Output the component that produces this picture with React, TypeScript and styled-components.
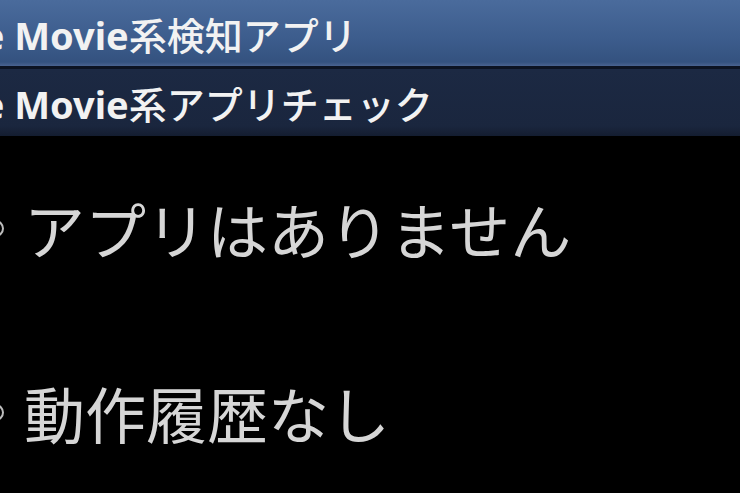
import styled, { createGlobalStyle } from "styled-components";

const Global = createGlobalStyle`
    html, body {
        margin: 0;
        padding: 0;
        background: #000;
        overflow: hidden;
    }
    #root {
        width: 740px;
        height: 493px;
        overflow: hidden;
        background: #000;
    }
`;

const Screen = styled.main`
    display: flex;
    flex-direction: column;
    width: 740px;
    height: 493px;
    overflow: hidden;
    font-family: "Noto Sans", "Noto Sans CJK JP", sans-serif;
`;

const Bar = styled.header<{ $variant: "title" | "sub" }>`
    flex: none;
    height: ${({ $variant }) => ($variant === "title" ? "66px" : "67px")};
    display: flex;
    align-items: center;
    white-space: nowrap;
    overflow: hidden;
    background: ${({ $variant }) =>
        $variant === "title"
            ? "linear-gradient(180deg, #4a6b9c 0%, #3c5c8c 60%, #34527f 94%, #4a6390 100%)"
            : "linear-gradient(180deg, #1c2943 0%, #1a263e 85%, #141d30 100%)"};
    border-bottom: ${({ $variant }) => ($variant === "title" ? "3px solid #0c1322" : "none")};
`;

const BarText = styled.span`
    margin-left: -65px;
    font-size: 38px;
    color: #f2f2f2;
`;

const Latin = styled.span`
    font-family: "Noto Sans", sans-serif;
    font-weight: 700;
`;

const Kana = styled.span`
    font-family: "Noto Sans CJK JP", sans-serif;
    font-weight: 500;
`;

const Body = styled.section`
    flex: 1;
    display: flex;
    flex-direction: column;
    background: #000;
`;

const Row = styled.div`
    flex: none;
    height: 184px;
    display: flex;
    align-items: center;
    gap: 20px;
    margin-left: -13px;
    white-space: nowrap;
`;

const Ring = styled.span`
    flex: none;
    width: 13px;
    height: 13px;
    border: 2px solid #bdbdbd;
    border-radius: 50%;
`;

const RowText = styled.span`
    font-family: "Noto Sans CJK JP", sans-serif;
    font-size: 61px;
    color: #d6d6d6;
    line-height: 1;
`;

export default function App() {
    return (
        <>
            <Global />
            <Screen>
                <Bar $variant="title">
                    <BarText>
                        <Latin>The Movie</Latin>
                        <Kana>系検知アプリ</Kana>
                    </BarText>
                </Bar>
                <Bar $variant="sub">
                    <BarText>
                        <Latin>The Movie</Latin>
                        <Kana>系アプリチェック</Kana>
                    </BarText>
                </Bar>
                <Body>
                    <Row>
                        <Ring />
                        <RowText>アプリはありません</RowText>
                    </Row>
                    <Row>
                        <Ring />
                        <RowText>動作履歴なし</RowText>
                    </Row>
                </Body>
            </Screen>
        </>
    );
}
